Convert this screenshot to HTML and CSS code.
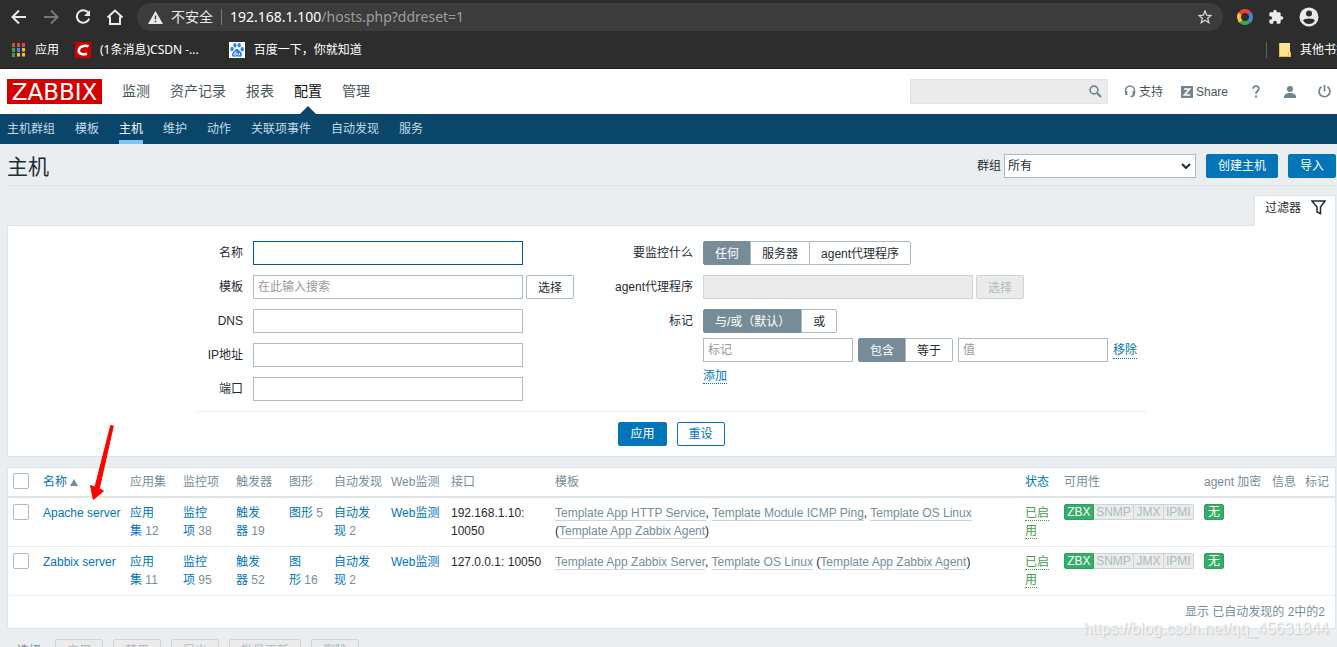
FILE: index.html
```html
<!DOCTYPE html>
<html lang="zh-CN">
<head>
<meta charset="utf-8">
<title>主机</title>
<link rel="stylesheet" href="styles.css">
</head>
<body>
<header class="chrome">
  <div class="toolbar">
    <button class="nav-btn" aria-label="后退"><svg width="16" height="16" viewBox="0 0 16 16" fill="none" stroke="#e8eaed" stroke-width="2"><path d="M15 8H2M8 1.500L1.500 8L8 14.500"/></svg></button>
    <button class="nav-btn" aria-label="前进"><svg width="16" height="16" viewBox="0 0 16 16" fill="none" stroke="#77787a" stroke-width="2"><path d="M1 8H14M8 1.500L14.500 8L8 14.500"/></svg></button>
    <button class="nav-btn" aria-label="刷新"><svg width="16" height="16" viewBox="0 0 16 16" fill="none" stroke="#e8eaed" stroke-width="2"><path d="M13.500 4A6.300 6.300 0 1 0 14.200 9.500"/><path d="M15 1V7H9Z" fill="#e8eaed" stroke="none"/></svg></button>
    <button class="nav-btn" aria-label="主页"><svg width="18" height="16" viewBox="0 0 18 16" fill="none" stroke="#e8eaed" stroke-width="2"><path d="M1.500 8.500L9 1.500L16.500 8.500M4 7.500V15H14V7.500"/></svg></button>
    <div class="address">
      <svg width="15" height="13" viewBox="0 0 15 13"><path d="M7.500 0L15 13H0Z" fill="#e8eaed"/><path d="M6.800 4.500H8.200V8.500H6.800ZM6.800 9.700H8.200V11.200H6.800Z" fill="#3c3c3c"/></svg>
      <span class="insecure">不安全</span>
      <span class="url"><b>192.168.1.100</b>/hosts.php?ddreset=1</span>
      <svg class="star" width="14" height="14" viewBox="0 0 14 14" fill="none" stroke="#d5d6d8" stroke-width="1.300"><path d="M7 1L8.700 5.200L13 5.500L9.700 8.300L10.800 12.700L7 10.300L3.200 12.700L4.300 8.300L1 5.500L5.300 5.200Z"/></svg>
    </div>
    <div class="extensions">
      <svg width="16" height="16" viewBox="0 0 16 16" fill="none" stroke-width="4"><path d="M3 4.700A6 6 0 0 1 12.500 4" stroke="#ea4335"/><path d="M12.500 4A6 6 0 0 1 12 12.400" stroke="#4a83d8"/><path d="M12 12.400A6 6 0 0 1 4 12.400" stroke="#34a853"/><path d="M4 12.400A6 6 0 0 1 3 4.700" stroke="#fbc02d"/></svg>
      <svg width="16" height="16" viewBox="0 0 24 24" fill="#e8eaed"><path d="M20.500 11H19V7c0-1.100-.9-2-2-2h-4V3.500a2.500 2.500 0 0 0-5 0V5H4c-1.100 0-2 .9-2 2v3.800h1.500a2.700 2.700 0 0 1 0 5.400H2V20c0 1.100.9 2 2 2h3.800v-1.500a2.700 2.700 0 0 1 5.400 0V22H17c1.100 0 2-.9 2-2v-4h1.500a2.500 2.500 0 0 0 0-5Z"/></svg>
      <svg width="20" height="20" viewBox="0 0 20 20"><circle cx="10" cy="10" r="9.500" fill="#e8eaed"/><circle cx="10" cy="6.500" r="3" fill="#2d2d2d"/><path d="M4 13.500C5 10.800 15 10.800 16 13.500C14.500 16 12.500 17 10 17S5.500 16 4 13.500Z" fill="#2d2d2d"/></svg>
    </div>
  </div>
  <nav class="bookmarks">
    <a href="#"><svg width="14" height="14" viewBox="0 0 14 14"><path d="M0 0H3V3H0ZM5 0H8V3H5ZM10 0H13V3H10Z" fill="#ea4335"/><path d="M0 5H3V8H0ZM0 10H3V13H0Z" fill="#34a853"/><path d="M5 5H8V8H5Z" fill="#4285f4"/><path d="M10 5H13V8H10ZM5 10H8V13H5ZM10 10H13V13H10Z" fill="#fbbc05"/><path d="M0 3H3V4H0ZM5 3H8V4H5ZM10 3H13V4H10ZM0 8H3V9H0ZM5 8H8V9H5ZM10 8H13V9H10ZM0 13H3V14H0ZM5 13H8V14H5ZM10 13H13V14H10Z" fill="#777"/></svg>应用</a>
    <a href="#"><svg width="16" height="16" viewBox="0 0 16 16"><path d="M0 0H16V16H0Z" fill="#c00"/><path d="M13.500 4.300C10 3 4.500 4 3.800 8C3.200 12 8 13 12 11.800" fill="none" stroke="#fff" stroke-width="2.600"/></svg>(1条消息)CSDN -...</a>
    <a href="#"><svg width="16" height="16" viewBox="0 0 16 16"><path d="M0 0H16V16H0Z" fill="#fff"/><g fill="#2f80ed"><ellipse cx="3" cy="7" rx="1.700" ry="2.200"/><ellipse cx="6" cy="3.300" rx="1.600" ry="2.300"/><ellipse cx="10.200" cy="3.300" rx="1.600" ry="2.300"/><ellipse cx="13.200" cy="7.200" rx="1.700" ry="2.200"/><path d="M8 7C10 7 10.500 9 12 10.200C14 12 13 15 10.500 14.800C9 14.500 7 14.500 5.500 14.800C3 15 2 12 4 10.200C5.500 9 6 7 8 7Z"/></g><path d="M7 9.500V13H5.800A1 1 0 0 1 5.800 11H7M8.500 11V12.500Q8.500 13 9.500 13H10.500V11" fill="none" stroke="#fff" stroke-width=".8"/></svg>百度一下，你就知道</a>
    <a href="#" class="other"><svg width="12" height="14" viewBox="0 0 12 14"><path d="M0 0H11V9H12V14H0Z" fill="#fde293"/><path d="M.5 0V13.500H9.500V9.500H11.500V13.500H9.500" fill="none" stroke="#e8c03c"/></svg>其他书签</a>
  </nav>
</header>

<div class="top">
  <a href="#" class="logo">ZABBIX</a>
  <nav class="main-nav">
    <a href="#">监测</a><a href="#">资产记录</a><a href="#">报表</a><a href="#" class="current">配置</a><a href="#">管理</a>
  </nav>
  <div class="tools">
    <div class="search">
      <input type="text" aria-label="搜索">
      <button aria-label="搜索"><svg width="13" height="13" viewBox="0 0 13 13" fill="none" stroke="#6f8590"><circle cx="5" cy="5" r="3.900" stroke-width="1.600"/><path d="M8 8L12 12" stroke-width="2.200"/></svg></button>
    </div>
    <a href="#" class="support"><svg width="12" height="13" viewBox="0 0 12 13" fill="none" stroke="#6f8590"><path d="M1.500 7V5.500A4.500 4.500 0 0 1 10.500 5.500V8C10.500 10.500 9 11.500 6.500 11.500" stroke-width="1.500"/><path d="M2.300 6V10M9.700 6V10" stroke-width="2.200"/></svg>支持</a>
    <a href="#" class="share"><svg width="12" height="12" viewBox="0 0 12 12"><path d="M0 0H12V12H0Z" fill="#6f8590"/><path d="M3 3H8.500L3.500 9H9.300" fill="none" stroke="#fff" stroke-width="1.700"/></svg>Share</a>
    <a href="#" aria-label="帮助"><svg width="8" height="13" viewBox="0 0 8 13"><path d="M1.200 3.800C1.200 .3 6.800 .3 6.800 3.600C6.800 6 4 6 4 9" fill="none" stroke="#6f8590" stroke-width="1.800"/><path d="M3 10.500H5V12.500H3Z" fill="#6f8590"/></svg></a>
    <a href="#" aria-label="用户" class="user"><svg width="12" height="12" viewBox="0 0 12 12" fill="#6f8590"><circle cx="6" cy="3" r="3"/><path d="M0 12V10C1 7.500 4 7 6 7S11 7.500 12 10V12Z"/></svg></a>
    <a href="#" aria-label="退出"><svg width="13" height="13" viewBox="0 0 13 13" fill="none" stroke="#6f8590" stroke-width="1.700"><path d="M3.600 1.800A5.400 5.400 0 1 0 9.400 1.800M6.500 0V6.500"/></svg></a>
  </div>
</div>
<nav class="sub-nav">
  <a href="#">主机群组</a><a href="#">模板</a><a href="#" class="current">主机</a><a href="#">维护</a><a href="#">动作</a><a href="#">关联项事件</a><a href="#">自动发现</a><a href="#">服务</a>
</nav>

<main>
  <div class="title-bar">
    <h1>主机</h1>
    <div class="actions">
      <label for="group">群组</label>
      <div class="select"><select id="group"><option>所有</option></select><svg width="10" height="6" viewBox="0 0 10 6" fill="none" stroke="#1f2c33" stroke-width="2"><path d="M1 1L5 5L9 1"/></svg></div>
      <button class="btn primary">创建主机</button>
      <button class="btn primary">导入</button>
    </div>
  </div>
  <div class="tab-row"><button class="filter-tab">过滤器<svg width="15" height="15" viewBox="0 0 15 15"><path d="M1 1H14L9.500 7V13.500L6 12V7Z" fill="#fff" stroke="#1f2c33" stroke-width="1.500"/></svg></button></div>
  <form class="filter">
    <div class="filter-body">
      <div class="columns">
        <div class="fields left">
          <label for="name">名称</label><div><input class="wide focus" id="name" type="text"></div>
          <label for="tpl">模板</label><div><input class="wide" id="tpl" type="text" placeholder="在此输入搜索"><button type="button" class="btn plain">选择</button></div>
          <label for="dns">DNS</label><div><input class="wide" id="dns" type="text"></div>
          <label for="ip">IP地址</label><div><input class="wide" id="ip" type="text"></div>
          <label for="port">端口</label><div><input class="wide" id="port" type="text"></div>
        </div>
        <div class="fields right">
          <span class="label">要监控什么</span><div><div class="segments"><button type="button" class="on">任何</button><button type="button">服务器</button><button type="button">agent代理程序</button></div></div>
          <label for="proxy">agent代理程序</label><div><input class="wide" id="proxy" type="text" disabled><button type="button" class="btn" disabled>选择</button></div>
          <span class="label">标记</span>
          <div class="stack">
            <div class="segments"><button type="button" class="on">与/或（默认）</button><button type="button">或</button></div>
            <div class="tag-row"><input type="text" aria-label="标记" placeholder="标记"><div class="segments"><button type="button" class="on">包含</button><button type="button">等于</button></div><input type="text" aria-label="值" placeholder="值"><a href="#" class="dotted">移除</a></div>
            <div class="add"><a href="#" class="dotted">添加</a></div>
          </div>
        </div>
      </div>
      <div class="filter-actions"><button type="button" class="btn primary">应用</button><button type="button" class="btn outline">重设</button></div>
    </div>
  </form>

  <table class="hosts">
    <colgroup><col class="c-check"><col class="c-name"><col class="c-item"><col class="c-item"><col class="c-item"><col class="c-graph"><col class="c-disc"><col class="c-web"><col class="c-if"><col><col class="c-status"><col class="c-avail"><col class="c-enc"><col class="c-info"><col class="c-tag"></colgroup>
    <thead><tr>
      <th><input type="checkbox" aria-label="全选"></th><th><a href="#">名称 <i class="sort"></i></a></th><th>应用集</th><th>监控项</th><th>触发器</th><th>图形</th><th>自动发现</th><th>Web监测</th><th>接口</th><th>模板</th><th><a href="#">状态</a></th><th>可用性</th><th>agent 加密</th><th>信息</th><th>标记</th>
    </tr></thead>
    <tbody>
    <tr>
      <td><input type="checkbox" aria-label="Apache server"></td><td class="nowrap"><a href="#">Apache server</a></td><td><a href="#">应用集</a>&nbsp;12</td><td><a href="#">监控项</a>&nbsp;38</td><td><a href="#">触发器</a>&nbsp;19</td><td><a href="#">图形</a>&nbsp;5</td><td><a href="#">自动发现</a>&nbsp;2</td><td><a href="#">Web监测</a></td><td class="dark">192.168.1.10: 10050</td>
      <td class="dark"><a href="#" class="tpl">Template App HTTP Service</a>, <a href="#" class="tpl">Template Module ICMP Ping</a>, <a href="#" class="tpl">Template OS Linux</a><br>(<a href="#" class="tpl">Template App Zabbix Agent</a>)</td>
      <td><a href="#" class="dotted green">已启用</a></td><td><div class="avail"><span class="ok">ZBX</span><span>SNMP</span><span>JMX</span><span>IPMI</span></div></td><td><span class="none">无</span></td><td></td><td></td>
    </tr>
    <tr>
      <td><input type="checkbox" aria-label="Zabbix server"></td><td class="nowrap"><a href="#">Zabbix server</a></td><td><a href="#">应用集</a>&nbsp;11</td><td><a href="#">监控项</a>&nbsp;95</td><td><a href="#">触发器</a>&nbsp;52</td><td><a href="#">图形</a>&nbsp;16</td><td><a href="#">自动发现</a>&nbsp;2</td><td><a href="#">Web监测</a></td><td class="dark">127.0.0.1: 10050</td>
      <td class="dark"><a href="#" class="tpl">Template App Zabbix Server</a>, <a href="#" class="tpl">Template OS Linux</a> (<a href="#" class="tpl">Template App Zabbix Agent</a>)</td>
      <td><a href="#" class="dotted green">已启用</a></td><td><div class="avail"><span class="ok">ZBX</span><span>SNMP</span><span>JMX</span><span>IPMI</span></div></td><td><span class="none">无</span></td><td></td><td></td>
    </tr>
    </tbody>
    <tfoot><tr><td colspan="15">显示 已自动发现的 2中的2</td></tr></tfoot>
  </table>

  <div class="bulk">
    <span>选择</span>
    <button class="btn" disabled>启用</button><button class="btn" disabled>禁用</button><button class="btn" disabled>导出</button><button class="btn" disabled>批量更新</button><button class="btn" disabled>删除</button>
  </div>
</main>
<svg class="arrow" width="24" height="78" viewBox="0 0 24 78"><path d="M20.700 2.500L23.300 3L9.300 65.500L13.500 68L3.300 76.500L.5 62.500L5 64Z" fill="#f00" stroke="#f00" stroke-linejoin="round"/></svg>
<div class="watermark">https://blog.csdn.net/qq_45631844</div>
</body>
</html>
```

FILE: styles.css
```css
* { box-sizing: border-box; }
html { height: 100%; overflow: hidden; }
body {
  margin: 0;
  height: 100%;
  overflow: hidden;
  position: relative;
  background: #ebeef0;
  color: #1f2c33;
  font: 12px/18px "Liberation Sans", "Noto Sans CJK SC", sans-serif;
}
a { color: #0275b8; text-decoration: none; }
button, input, select { font: inherit; color: inherit; margin: 0; }
button { padding: 0; border: 0; background: none; white-space: nowrap; }
svg { display: block; flex: none; }

.chrome { background: #2d2d2d; color: #fff; border-bottom: 1px solid #1c1c1c; height: 69px; }
.toolbar { display: flex; align-items: center; padding: 3px 18px 3px 11px; }
.nav-btn { width: 32px; display: flex; justify-content: center; align-items: center; flex: none; }
.nav-btn:first-child { width: 16px; margin-right: 8px; }
.address {
  flex: 1;
  display: flex;
  align-items: center;
  height: 28px;
  margin-left: 6px;
  padding: 0 11px;
  border-radius: 14px;
  background: #3c3c3c;
  font: 14px/20px "Noto Sans", "Noto Sans CJK SC", sans-serif;
}
.insecure { margin-left: 8px; padding-right: 8px; border-right: 1px solid #77787a; line-height: 16px; color: #e8eaed; }
.url { margin-left: 8px; color: #9aa0a6; }
.url b { font-weight: normal; color: #fff; }
.star { margin-left: auto; }
.extensions { display: flex; align-items: center; gap: 15px; margin-left: 14px; }
.bookmarks { display: flex; align-items: center; height: 32px; padding-left: 12px; font-family: "Noto Sans", "Noto Sans CJK SC", sans-serif; }
.bookmarks a { display: flex; align-items: center; gap: 9px; margin-right: 16px; color: #fff; white-space: nowrap; }
.bookmarks a + a + a { margin-left: 14px; }
.bookmarks .other { margin: 0 -11px 0 auto; padding-left: 12px; border-left: 1px solid #5f6368; line-height: 16px; }
.bookmarks a.other { margin-left: auto; }

.top { display: flex; align-items: center; height: 45px; padding: 0 6px 0 7px; background: #fff; }
.logo { width: 95px; height: 25px; background: #d40000; color: #fff; font: 23px/26px "DejaVu Sans", sans-serif; text-align: center; }
.main-nav { display: flex; align-self: stretch; margin-left: 10px; font-size: 14px; line-height: 44px; }
.main-nav a { padding: 0 10px; color: #49545b; position: relative; }
.main-nav .current { color: #0e1012; }
.main-nav .current::after {
  content: "";
  position: absolute;
  left: 50%;
  bottom: 0;
  margin-left: -8px;
  border: 8px solid transparent;
  border-top: 0;
  border-bottom-color: #0a466a;
}
.tools { display: flex; align-items: center; margin-left: auto; }
.tools a { display: flex; align-items: center; gap: 3px; color: #49545b; margin-right: 24px; }
.tools .support { margin-right: 18px; }
.tools a:last-child { margin-right: 0; }
.tools .user { margin-right: 22px; }
.search { display: flex; align-items: center; width: 198px; height: 25px; margin-right: 16px; padding-right: 5px; border: 1px solid #dfe4e7; background: #ebebeb; }
.search input { flex: 1; min-width: 0; border: 0; background: none; }

.sub-nav { display: flex; gap: 20px; height: 30px; padding: 0 7px; background: #0a466a; }
.sub-nav a { color: #c3dbe9; line-height: 30px; }
.sub-nav .current { color: #fff; border-bottom: 4px solid #7dc4f5; }

main { padding: 0 1px 0 7px; }
.title-bar { display: flex; justify-content: space-between; height: 42px; padding-top: 10px; border-bottom: 1px solid #dfe4e7; }
h1 { margin: 0; font-size: 21px; line-height: 26px; font-weight: normal; }
.actions { display: flex; align-items: center; height: 24px; }
.select { position: relative; width: 192px; margin: 0 10px 0 3px; }
.select select { width: 100%; height: 24px; padding: 0 3px; border: 1px solid #acbbc2; border-radius: 0; background: #fff; appearance: none; }
.select svg { position: absolute; right: 5px; top: 9px; }
.btn { height: 24px; padding: 0 11px; border: 1px solid #acbbc2; border-radius: 2px; background: #fff; }
.btn.primary { background: #0275b8; border-color: #0275b8; color: #fff; }
.btn.primary + .btn.primary { margin-left: 10px; }
.btn.outline { border-color: #0275b8; color: #0275b8; }
.btn:disabled { background: #ebebeb; border-color: #ccd5d9; color: #acbbc2; }

.tab-row { display: flex; justify-content: flex-end; padding-top: 9px; }
.filter-tab { display: flex; align-items: center; gap: 10px; height: 31px; margin-bottom: -1px; z-index: 1; padding: 0 9px 7px 10px; border: 1px solid #dfe4e7; border-bottom: 0; background: #fff; }
.filter { border: 1px solid #dfe4e7; background: #fff; padding: 15px 0 10px; }
.filter-body { max-width: 949px; margin: 0 auto; }
.columns { display: grid; grid-template-columns: 386px 1fr; padding-bottom: 10px; border-bottom: 1px solid #ebeef0; }
.fields { display: grid; gap: 10px; align-content: start; line-height: 24px; }
.fields.left { grid-template-columns: 46px 1fr; }
.fields.right { grid-template-columns: 110px 1fr; }
.fields > label, .fields > .label { text-align: right; white-space: nowrap; }
.fields > div { display: flex; gap: 3px; }
.filter input { height: 24px; width: 150px; padding: 0 4px; border: 1px solid #acbbc2; background: #fff; outline: 0; }
.filter input.wide { width: 270px; }
.filter input.focus { border-color: #005c8f; }
.filter input:disabled { background: #ebebeb; border-color: #ccd5d9; }
.filter input::placeholder { color: #999; opacity: 1; }
.segments { display: flex; }
.segments button { height: 24px; padding: 0 11px; border: 1px solid #acbbc2; margin-left: -1px; background: #fff; }
.segments button:first-child { margin-left: 0; border-radius: 2px 0 0 2px; }
.segments button:last-child { border-radius: 0 2px 2px 0; }
.segments .on { background: #768d99; border-color: #768d99; color: #fff; }
.fields > .stack { flex-direction: column; gap: 5px; }
.tag-row { display: flex; gap: 5px; align-items: center; }
.dotted { border-bottom: 1px dotted #0275b8; line-height: 16px; }
.add { line-height: 18px; }
.filter-actions { display: flex; justify-content: center; gap: 10px; padding-top: 10px; }

.hosts { width: 100%; margin-top: 10px; border: 1px solid #dfe4e7; border-collapse: separate; border-spacing: 0; table-layout: fixed; background: #fff; color: #768d99; }
.c-check { width: 30px; }
.c-name { width: 87px; }
.c-item { width: 53px; }
.c-graph { width: 45px; }
.c-disc { width: 57px; }
.c-web { width: 60px; }
.c-if { width: 104px; }
.c-status { width: 39px; }
.c-avail { width: 140px; }
.c-enc { width: 68px; }
.c-info { width: 33px; }
.c-tag { width: 35px; }
th, td { padding: 6px 5px; text-align: left; vertical-align: top; font-weight: normal; border-bottom: 1px solid #ebeef0; }
th { padding: 5px 5px; border-bottom: 2px solid #dfe4e7; white-space: nowrap; }
.nowrap { white-space: nowrap; }
.dark { color: #1f2c33; }
.hosts input { display: block; appearance: none; width: 16px; height: 16px; border: 1px solid #acbbc2; border-radius: 2px; background: #fff; }
.sort { display: inline-block; border: 4px solid transparent; border-top: 0; border-bottom: 7px solid #768d99; }
.tpl { color: #768d99; border-bottom: 1px solid #ccd5d9; }
.green { color: #429e47; border-color: #429e47; }
.avail { display: flex; width: 130px; height: 16px; line-height: 14px; }
.avail span { flex: auto; text-align: center; border: 1px solid #ccd5d9; border-left-width: 0; background: #ebebeb; color: #acbbc2; }
.avail span:last-child { border-radius: 0 2px 2px 0; }
.avail .ok { background: #34af67; border: 1px solid #2f9f5e; border-radius: 2px 0 0 2px; color: #fff; }
.none { display: block; width: 20px; height: 16px; line-height: 14px; text-align: center; border: 1px solid #2f9f5e; border-radius: 2px; background: #34af67; color: #fff; }
tfoot td { padding: 7px 10px; text-align: right; border: 0; }

.bulk { display: flex; align-items: center; gap: 10px; margin-top: 10px; padding-left: 10px; color: #768d99; }
.bulk span { margin-right: 4px; }

.arrow { position: absolute; left: 90px; top: 423px; }
.watermark { position: absolute; right: 8px; top: 619px; font-size: 16px; line-height: 20px; color: #f4f4f4; text-shadow: 1px 1px 1px #c4c8ca; }
```
